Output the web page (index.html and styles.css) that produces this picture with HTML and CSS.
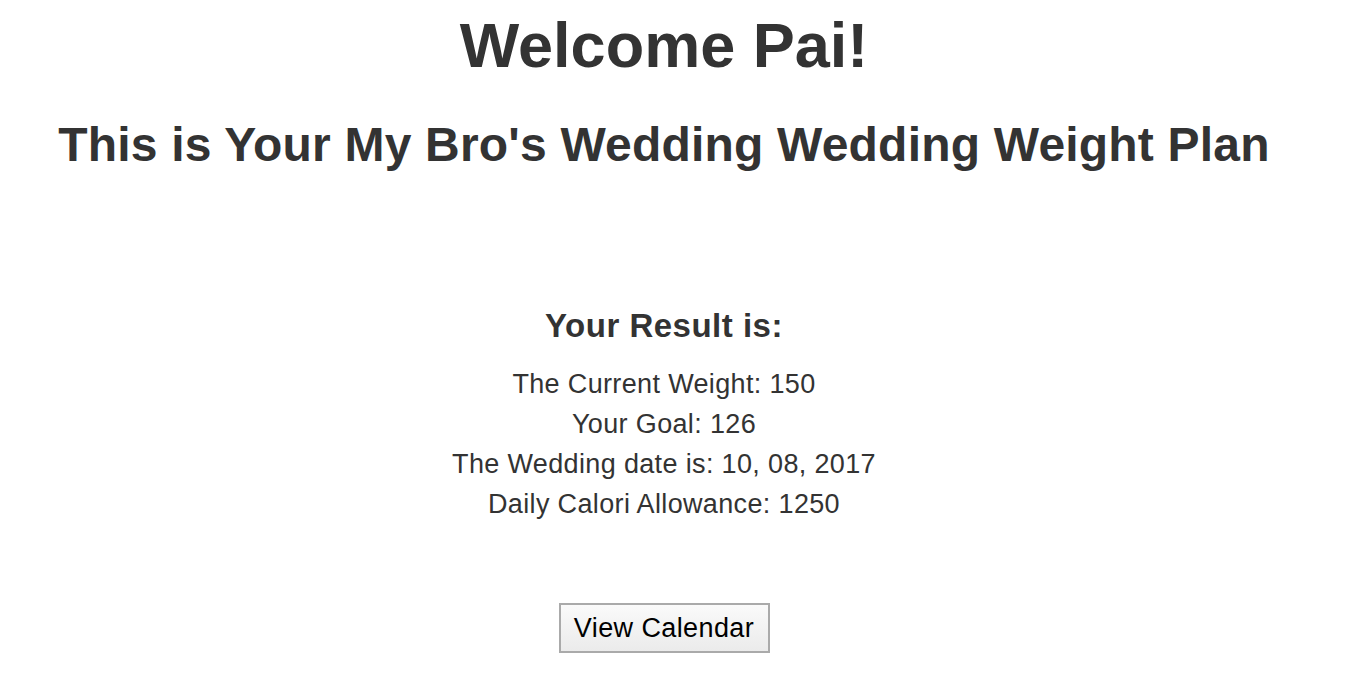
FILE: index.html
```html
<!DOCTYPE html>
<html>
<head>
<meta charset="utf-8">
<link rel="stylesheet" href="styles.css">
</head>
<body>
<div class="page">
  <h1 class="title">Welcome Pai!</h1>
  <h2 class="subtitle">This is Your My Bro's Wedding Wedding Weight Plan</h2>
  <section class="result">
    <h3 class="result-head">Your Result is:</h3>
    <div class="result-lines">
      <p class="line">The Current Weight: 150</p>
      <p class="line">Your Goal: 126</p>
      <p class="line">The Wedding date is: 10, 08, 2017</p>
      <p class="line">Daily Calori Allowance: 1250</p>
    </div>
  </section>
  <div class="actions">
    <button class="btn">View Calendar</button>
  </div>
</div>
</body>
</html>
```
FILE: styles.css
```css
html, body {
  margin: 0;
  padding: 0;
  background: #fff;
}
.page {
  width: 1328px;
  font-family: "Liberation Sans", Arial, sans-serif;
  color: #333;
  text-align: center;
  display: flex;
  flex-direction: column;
  align-items: center;
}
.title {
  margin: 10px 0 0;
  font-size: 63px;
  line-height: 70px;
  font-weight: bold;
}
.subtitle {
  margin: 37px 0 0;
  font-size: 48px;
  line-height: 56px;
  font-weight: bold;
  letter-spacing: 0.2px;
}
.result {
  margin-top: 133px;
}
.result-head {
  margin: 0;
  font-size: 33px;
  line-height: 40px;
  font-weight: bold;
  letter-spacing: 0.5px;
}
.result-lines {
  margin-top: 18px;
}
.line {
  margin: 0;
  font-size: 27px;
  line-height: 40px;
  letter-spacing: 0.35px;
}
.actions {
  margin-top: 79px;
}
.btn {
  font-family: "Liberation Sans", Arial, sans-serif;
  font-size: 27px;
  letter-spacing: 0.4px;
  color: #000;
  width: 211px;
  height: 50px;
  border: 2px solid #aaa;
  background: linear-gradient(#fafafa, #ebebeb);
  padding: 0;
}
```
